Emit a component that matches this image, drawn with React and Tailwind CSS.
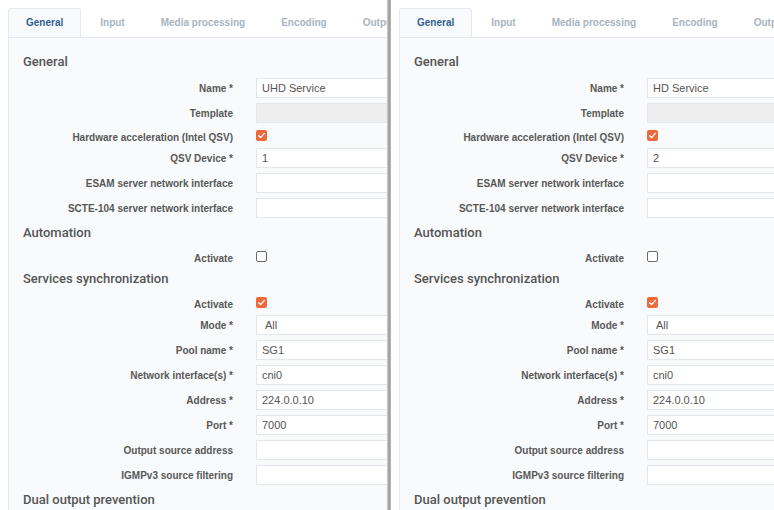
import React from "react";

// --- Form layout shared by both service windows ---
const FIELDS = [
  { type: "heading", label: "General" },
  { type: "input", label: "Name *", key: "name" },
  { type: "disabled", label: "Template" },
  { type: "checkbox", label: "Hardware acceleration (Intel QSV)", checked: true },
  { type: "input", label: "QSV Device *", key: "qsv" },
  { type: "input", label: "ESAM server network interface" },
  { type: "input", label: "SCTE-104 server network interface" },
  { type: "heading", label: "Automation" },
  { type: "checkbox", label: "Activate", checked: false },
  { type: "heading", label: "Services synchronization" },
  { type: "checkbox", label: "Activate", checked: true },
  { type: "select", label: "Mode *", value: "All" },
  { type: "input", label: "Pool name *", value: "SG1" },
  { type: "input", label: "Network interface(s) *", value: "cni0" },
  { type: "input", label: "Address *", value: "224.0.0.10" },
  { type: "input", label: "Port *", value: "7000" },
  { type: "input", label: "Output source address" },
  { type: "input", label: "IGMPv3 source filtering" },
  { type: "heading", label: "Dual output prevention" },
];

const TABS = ["General", "Input", "Media processing", "Encoding", "Output"];

const SERVICES = [
  { name: "UHD Service", qsv: "1" },
  { name: "HD Service", qsv: "2" },
];

const Checkbox = ({ checked }) =>
  checked ? (
    <span className="flex w-[11px] h-[11px] rounded-[2px] bg-[#f0693a] items-center justify-center">
      <svg viewBox="0 0 12 12" className="w-[9px] h-[9px]">
        <path d="M2.2 6.3 L4.8 8.8 L9.8 3.2" fill="none" stroke="#fff" strokeWidth="1.8" strokeLinecap="round" strokeLinejoin="round" />
      </svg>
    </span>
  ) : (
    <span className="block w-[11px] h-[11px] rounded-[2px] bg-white border border-[#6b6b6b]" />
  );

const FieldRow = ({ field, service }) => {
  if (field.type === "heading") {
    return (
      <div className="h-[18px] mb-[8px] pt-[2px] flex items-center text-[13px] font-medium text-[#555] font-['Roboto',sans-serif]">
        {field.label}
      </div>
    );
  }

  const value = field.key ? service[field.key] : field.value || "";

  if (field.type === "checkbox") {
    return (
      <div className="h-[15px] mb-[5px] flex items-center">
        <div className="w-[210px] shrink-0 text-right pt-[3px] text-[10px] font-bold text-[#585858]">{field.label}</div>
        <div className="ml-[23px]">
          <Checkbox checked={field.checked} />
        </div>
      </div>
    );
  }

  return (
    <div className="h-[20px] mb-[5px] flex items-center">
      <div className="w-[210px] shrink-0 text-right text-[10px] font-bold text-[#585858]">{field.label}</div>
      <div
        className={`ml-[23px] w-[320px] shrink-0 h-[20px] border border-[#e3e6ea] flex items-center text-[11px] text-[#555] ${
          field.type === "disabled" ? "bg-[#eeeeee]" : "bg-white"
        } ${field.type === "select" ? "pl-[8px]" : "pl-[5px]"}`}
      >
        {value}
      </div>
    </div>
  );
};

const ServicePanel = ({ service }) => (
  <div className="pl-[8px] pt-[8px] w-[560px]">
    {/* Tabs */}
    <div className="flex h-[29px]">
      {TABS.map((tab, i) => (
        <div
          key={tab}
          className={`h-[29px] px-[17px] mr-[2px] pb-[1px] flex items-center text-[10px] font-bold whitespace-nowrap ${
            i === 0
              ? "bg-[#f9fafb] border border-b-0 border-[#e5e8ec] rounded-t-[3px] text-[#2f5f8f] relative z-10"
              : "text-[#a9b4bf]"
          }`}
        >
          {tab}
        </div>
      ))}
    </div>

    {/* Tab content */}
    <div className="bg-[#f9fafb] border-l border-t border-[#e5e8ec] pl-[14px] pt-[14px] h-[520px]">
      {FIELDS.map((field, i) => (
        <FieldRow key={i} field={field} service={service} />
      ))}
    </div>
  </div>
);

export default function App() {
  return (
    <div className="w-[774px] h-[510px] overflow-hidden bg-white flex font-['Liberation_Sans',Arial,sans-serif]">
      <div className="w-[387px] shrink-0 overflow-hidden">
        <ServicePanel service={SERVICES[0]} />
      </div>
      {/* window edge */}
      <div className="w-[4px] shrink-0 bg-linear-to-r from-[#d2d2d2] via-[#9c9c9c] to-[#b8b8b8]" />
      <div className="flex-1 overflow-hidden">
        <ServicePanel service={SERVICES[1]} />
      </div>
    </div>
  );
}
